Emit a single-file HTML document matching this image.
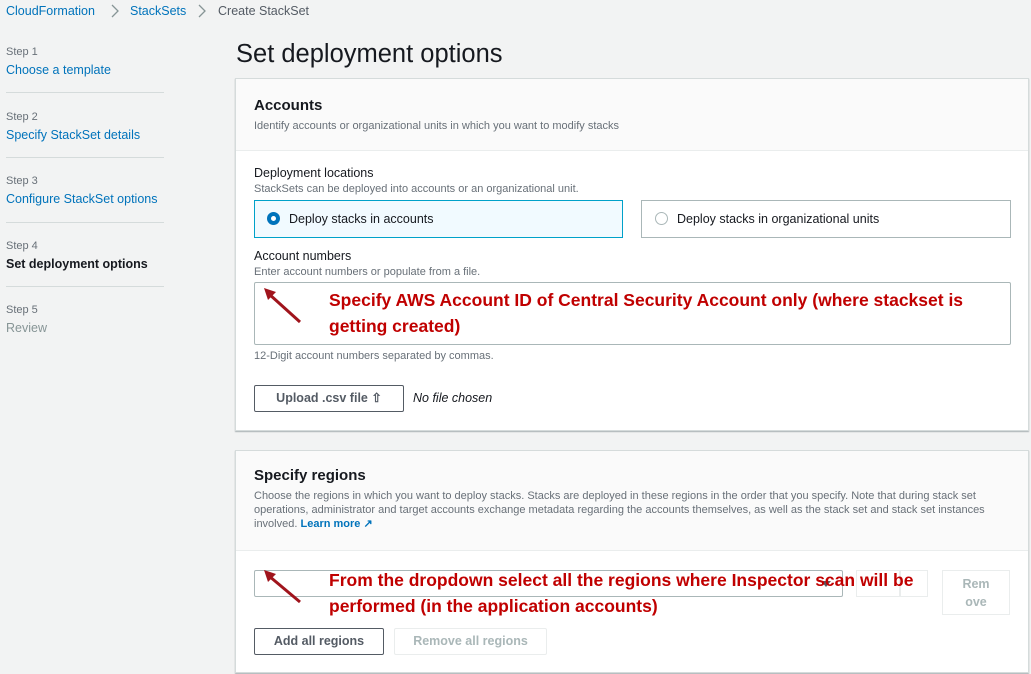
<!DOCTYPE html>
<html><head><meta charset="utf-8"><style>
*{margin:0;padding:0;box-sizing:border-box}
body{width:1031px;height:674px;background:#f2f3f3;font-family:"Liberation Sans",Arial,sans-serif;position:relative;overflow:hidden;color:#16191f}
.a{position:absolute;white-space:nowrap}
.lk{color:#0073bb}
.s{font-size:11px;color:#687078}
.n{font-size:12.5px}
.hr{position:absolute;left:6px;width:158px;height:1px;background:#d5dbdb}
.panel{position:absolute;left:235px;width:794px;background:#fff;border:1px solid #d5dbdb;box-shadow:0 1px 1px rgba(0,28,36,.3)}
.red{color:#c00000;font-weight:bold;font-size:17.5px;font-family:"Liberation Sans Narrow","Liberation Sans",sans-serif;line-height:26px}
.btn{position:absolute;border:1px solid #545b64;background:#fff;font-weight:bold;font-size:12.5px;color:#545b64;text-align:center;border-radius:2px}
</style></head><body>
<div class="a n lk" style="left:6px;top:4px">CloudFormation</div>
<svg class="a" style="left:109px;top:3px" width="12" height="16"><polyline points="3,2 9,8 3,14" fill="none" stroke="#879596" stroke-width="1.3"/></svg>
<div class="a n lk" style="left:130px;top:4px">StackSets</div>
<svg class="a" style="left:196px;top:3px" width="12" height="16"><polyline points="3,2 9,8 3,14" fill="none" stroke="#879596" stroke-width="1.3"/></svg>
<div class="a n" style="left:218px;top:4px;color:#545b64">Create StackSet</div>

<div class="a s" style="left:6px;top:46px">Step 1</div>
<div class="a n lk" style="left:6px;top:63px">Choose a template</div>
<div class="hr" style="top:92px"></div>
<div class="a s" style="left:6px;top:111px">Step 2</div>
<div class="a n lk" style="left:6px;top:128px">Specify StackSet details</div>
<div class="hr" style="top:157px"></div>
<div class="a s" style="left:6px;top:175px">Step 3</div>
<div class="a n lk" style="left:6px;top:192px">Configure StackSet options</div>
<div class="hr" style="top:222px"></div>
<div class="a s" style="left:6px;top:240px">Step 4</div>
<div class="a n" style="left:6px;top:257px;font-weight:bold">Set deployment options</div>
<div class="hr" style="top:286px"></div>
<div class="a s" style="left:6px;top:304px">Step 5</div>
<div class="a n" style="left:6px;top:321px;color:#879596">Review</div>

<div class="a" style="left:236px;top:40px;font-size:25.5px">Set deployment options</div>

<div class="panel" style="top:78px;height:353px">
 <div style="height:72px;background:#fafafa;border-bottom:1px solid #eaeded"></div>
 <div class="a" style="left:18px;top:18px;font-size:15px;font-weight:bold">Accounts</div>
 <div class="a s" style="left:18px;top:41px">Identify accounts or organizational units in which you want to modify stacks</div>
 <div class="a n" style="left:18px;top:87px">Deployment locations</div>
 <div class="a s" style="left:18px;top:104px">StackSets can be deployed into accounts or an organizational unit.</div>
 <div class="a" style="left:18px;top:121px;width:369px;height:38px;border:1px solid #00a1c9;background:#f1faff"></div>
 <div class="a" style="left:31px;top:133px;width:13px;height:13px;border-radius:50%;border:4px solid #0073bb;background:#fff"></div>
 <div class="a n" style="left:53px;top:133px">Deploy stacks in accounts</div>
 <div class="a" style="left:405px;top:121px;width:370px;height:38px;border:1px solid #aab7b8"></div>
 <div class="a" style="left:419px;top:133px;width:13px;height:13px;border-radius:50%;border:1px solid #aab7b8"></div>
 <div class="a n" style="left:441px;top:133px">Deploy stacks in organizational units</div>
 <div class="a n" style="left:18px;top:170px">Account numbers</div>
 <div class="a s" style="left:18px;top:187px">Enter account numbers or populate from a file.</div>
 <div class="a" style="left:18px;top:203px;width:757px;height:63px;border:1px solid #aab7b8;border-radius:2px"></div>
 <div class="a red" style="left:93px;top:208px">Specify AWS Account ID of Central Security Account only (where stackset is<br>getting created)</div>
 <div class="a s" style="left:18px;top:271px">12-Digit account numbers separated by commas.</div>
 <div class="btn" style="left:18px;top:306px;width:150px;height:27px;line-height:25px">Upload .csv file &#8679;</div>
 <div class="a n" style="left:177px;top:312px;font-style:italic;color:#16191f">No file chosen</div>
</div>

<div class="panel" style="top:450px;height:223px">
 <div style="height:100px;background:#fafafa;border-bottom:1px solid #eaeded"></div>
 <div class="a" style="left:18px;top:16px;font-size:15px;font-weight:bold">Specify regions</div>
 <div class="a s" style="left:18px;top:38px;line-height:14px;white-space:normal;width:740px">Choose the regions in which you want to deploy stacks. Stacks are deployed in these regions in the order that you specify. Note that during stack set operations, administrator and target accounts exchange metadata regarding the accounts themselves, as well as the stack set and stack set instances involved. <b class="lk">Learn more &#x2197;</b></div>
 <div class="a" style="left:18px;top:119px;width:589px;height:27px;border:1px solid #aab7b8;border-radius:2px"></div>
 <svg class="a" style="left:585px;top:130px" width="10" height="8"><polygon points="0,0 10,0 5,6" fill="#545b64"/></svg>
 <div class="a" style="left:620px;top:119px;width:44px;height:27px;border:1px solid #eaeded"></div>
 <div class="a" style="left:664px;top:119px;width:28px;height:27px;border:1px solid #eaeded"></div>
 <div class="a" style="left:706px;top:119px;width:68px;height:45px;border:1px solid #eaeded;color:#aab7b8;font-weight:bold;font-size:12.5px;text-align:center;line-height:18px;padding-top:4px">Rem<br>ove</div>
 <div class="a red" style="left:93px;top:116px">From the dropdown select all the regions where Inspector scan will be<br>performed (in the application accounts)</div>
 <div class="btn" style="left:18px;top:177px;width:130px;height:27px;line-height:25px">Add all regions</div>
 <div class="btn" style="left:158px;top:177px;width:153px;height:27px;line-height:25px;border-color:#eaeded;color:#aab7b8">Remove all regions</div>
</div>

<svg class="a" style="left:262px;top:286px" width="42" height="40"><line x1="38" y1="36" x2="7" y2="8" stroke="#a0141c" stroke-width="3"/><polygon points="2,2 14,6 6,14" fill="#a0141c"/></svg>
<svg class="a" style="left:262px;top:568px" width="42" height="40"><line x1="38" y1="34" x2="7" y2="8" stroke="#a0141c" stroke-width="3"/><polygon points="2,2 14,6 6,14" fill="#a0141c"/></svg>
</body></html>
